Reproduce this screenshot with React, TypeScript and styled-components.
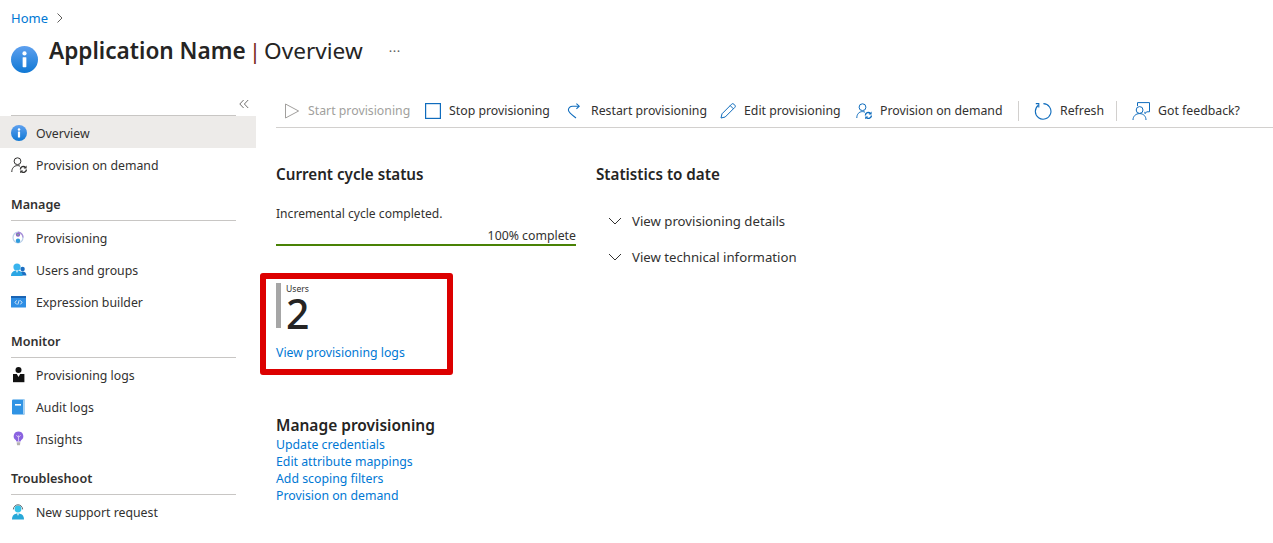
import { ReactNode } from 'react';
import styled, { createGlobalStyle } from 'styled-components';

const GlobalStyle = createGlobalStyle`
  html, body { margin: 0; padding: 0; background: #fff; }
  body { font-family: "Noto Sans", "Open Sans", "Liberation Sans", sans-serif; color: #323130; overflow: hidden; }
`;

const Svg = ({ size = 16, children }: { size?: number; children: ReactNode }) => (
  <svg width={size} height={size} viewBox="0 0 16 16" fill="none">{children}</svg>
);

const InfoIcon = ({ size = 16, id }: { size?: number; id: string }) => (
  <Svg size={size}>
    <defs>
      <linearGradient id={id} x1="0" y1="0" x2="0" y2="1">
        <stop offset="0" stopColor="#5ea0ef" />
        <stop offset="1" stopColor="#0f78d4" />
      </linearGradient>
    </defs>
    <circle cx="8" cy="8" r="8" fill={`url(#${id})`} />
    <rect x="6.9" y="6.6" width="2.2" height="6" rx="0.4" fill="#fff" />
    <circle cx="8" cy="4.4" r="1.25" fill="#fff" />
  </Svg>
);

const PersonSync = ({ color = '#323130', sync = '#323130' }: { color?: string; sync?: string }) => (
  <Svg>
    <circle cx="6.5" cy="4.2" r="3.4" stroke={color} strokeWidth="1" />
    <path d="M.8 15c0-3.8 2.2-6.4 5.7-6.4 1 0 1.8.2 2.5.6" stroke={color} strokeWidth="1" />
    <path d="M9.4 12.4a2.9 2.9 0 0 1 5-2M15.4 12.4a2.9 2.9 0 0 1-5 2" stroke={sync} strokeWidth="1.4" />
    <path d="M15.6 8.4v3h-3zM9.2 16.4v-3h3z" fill={sync} />
  </Svg>
);

const ProvisioningIcon = () => (
  <Svg>
    <ellipse cx="7" cy="7.6" rx="5" ry="5.4" stroke="#b9cfe8" strokeWidth="1.2" />
    <path d="M7 2.2a5 5.4 0 0 1 5 5.4" stroke="#a98bd8" strokeWidth="1.2" />
    <circle cx="7" cy="4.6" r="2.2" fill="#8a63c9" />
    <circle cx="7" cy="10.8" r="2.2" fill="#2f9bdc" />
    <circle cx="7" cy="4.6" r="0.8" fill="#7fd06a" />
  </Svg>
);

const UsersIcon = () => (
  <Svg>
    <circle cx="11.6" cy="7" r="2.2" fill="#1b6ec2" />
    <path d="M8 13.6c0-2.7 1.4-4.2 3.6-4.2s3.8 1.5 3.8 4.2z" fill="#1b6ec2" />
    <circle cx="6" cy="5" r="3.6" fill="#3ab4ee" />
    <path d="M0 14c0-3.8 2.4-5.6 6-5.6s5.6 1.8 5.6 5.6z" fill="#2ba6e4" />
    <path d="M5 8.4h2L6 11z" fill="#fff" />
  </Svg>
);

const ExpressionIcon = () => (
  <Svg>
    <rect x="0" y="2" width="15" height="11.4" rx="0.5" fill="#2f8ee4" />
    <rect x="0" y="2" width="15" height="2" fill="#1b64b4" />
    <path d="M5.6 6.4L4 8.4l1.6 2M9.4 6.4l1.6 2-1.6 2M8.2 6.2L6.8 10.6" stroke="#fff" strokeWidth="0.8" />
  </Svg>
);

const LogIcon = () => (
  <Svg>
    <circle cx="7.5" cy="3" r="3" fill="#111" />
    <path d="M2 7h11.4v8.2H2z" fill="#111" />
    <path d="M5.8 7h3.4L7.5 10z" fill="#fff" />
  </Svg>
);

const AuditIcon = () => (
  <Svg>
    <rect x="1" y="0.4" width="13" height="15" rx="1.2" fill="#2f93e4" />
    <rect x="12" y="0.4" width="2" height="15" rx="0.8" fill="#a9d2f2" />
    <rect x="4" y="5" width="6" height="1.6" fill="#fff" />
  </Svg>
);

const InsightsIcon = () => (
  <Svg>
    <path d="M7.5.4a4.8 4.8 0 0 0-2.8 8.7c.5.4.6.9.7 1.5h4.2c.1-.6.2-1.1.7-1.5A4.8 4.8 0 0 0 7.5.4z" fill="#8a63e0" />
    <path d="M7.5 4.4v5.8M5.4 4.2l2.1 2.4 2.1-2.4" stroke="#d8c6f2" strokeWidth="0.9" />
    <path d="M5.6 11.2h3.8l-.5 3H6.1z" fill="#b4b2b0" />
  </Svg>
);

const SupportIcon = () => (
  <Svg>
    <circle cx="7" cy="5" r="3.4" fill="#35c2e8" />
    <path d="M2.4 5.4a4.6 4.6 0 0 1 9.2 0" stroke="#5a6a72" strokeWidth="1" />
    <path d="M1 15.6c0-4 2.2-6 6-6s6 2 6 6z" fill="#28a8d8" />
    <path d="M6 9.6h2L7 12z" fill="#fff" />
  </Svg>
);

const PlayIcon = () => (
  <Svg>
    <path d="M1.5 1L14.6 8 1.5 15z" stroke="#a19f9d" strokeWidth="1" strokeLinejoin="round" />
  </Svg>
);

const StopIcon = () => (
  <Svg>
    <rect x="0.6" y="0.6" width="14.8" height="14.8" stroke="#0f6cbd" strokeWidth="1.2" />
  </Svg>
);

const RestartIcon = () => (
  <Svg>
    <path d="M12 3.2H5.6C3 3.2 1.4 5 1.4 7c0 1.6 3.6 5 7.6 8" stroke="#0f6cbd" strokeWidth="1.1" />
    <path d="M9.4.6L12.2 3.2 9.4 5.8" stroke="#0f6cbd" strokeWidth="1.1" />
  </Svg>
);

const PencilIcon = () => (
  <Svg>
    <path d="M1 15l1-4.2L11.6 1.2a1.6 1.6 0 0 1 2.3 0l.9.9a1.6 1.6 0 0 1 0 2.3L5.2 14z" stroke="#0f6cbd" strokeWidth="1" strokeLinejoin="round" />
    <path d="M10.2 2.6l3.2 3.2" stroke="#0f6cbd" strokeWidth="1" />
  </Svg>
);

const RefreshIcon = () => (
  <svg width="18" height="18" viewBox="0 0 18 18" fill="none">
    <path d="M4.4 3.2a7.8 7.8 0 1 0 5-1.6" stroke="#0f6cbd" strokeWidth="1.1" />
    <path d="M1.8 1.6h3v4" stroke="#0f6cbd" strokeWidth="1.1" />
  </svg>
);

const FeedbackIcon = () => (
  <svg width="18" height="18" viewBox="0 0 18 18" fill="none">
    <path d="M5.5 4V.6h12v9.2h-2.6l-2 1.8V9.8" stroke="#0f6cbd" strokeWidth="1" />
    <circle cx="7.6" cy="8" r="3.4" stroke="#0f6cbd" strokeWidth="1" />
    <path d="M1 18c0-3.6 2.6-6.4 6.6-6.4s6.4 2.8 6.4 6.4" stroke="#0f6cbd" strokeWidth="1" />
  </svg>
);

const ChevronRight = () => (
  <svg width="8" height="12" viewBox="0 0 8 12" fill="none">
    <path d="M1.5 1.5L6 6l-4.5 4.5" stroke="#605e5c" strokeWidth="1" />
  </svg>
);

const ChevronDown = () => (
  <svg width="14" height="8" viewBox="0 0 14 8" fill="none">
    <path d="M1 1l6 6 6-6" stroke="#323130" strokeWidth="1" />
  </svg>
);

const CollapseIcon = () => (
  <svg width="10" height="10" viewBox="0 0 10 10" fill="none">
    <path d="M4.6 1L.8 5l3.8 4M9.2 1L5.4 5l3.8 4" stroke="#605e5c" strokeWidth="0.9" />
  </svg>
);

const Page = styled.div`
  width: 1273px;
  height: 543px;
  display: flex;
  flex-direction: column;
  overflow: hidden;
`;

const Header = styled.header`
  height: 94px;
  padding-left: 11px;
  box-sizing: border-box;
`;

const Crumbs = styled.div`
  display: flex;
  align-items: center;
  gap: 8px;
  height: 36px;
  font-size: 13px;
  color: #0078d4;
`;

const TitleRow = styled.div`
  display: flex;
  align-items: flex-start;
`;

const TitleIcon = styled.span`
  display: block;
  margin-top: 10px;
  width: 38px;
  height: 27px;
`;

const Title = styled.h1`
  margin: 0;
  font-size: 22.6px;
  line-height: 30px;
  font-weight: 600;
  color: #252423;
  span { font-weight: 400; }
  i { font-style: normal; font-weight: 400; color: #7a2a20; padding: 0 3px; }
`;

const More = styled.span`
  margin-left: 26px;
  font-size: 13px;
  line-height: 30px;
  color: #605e5c;
  letter-spacing: 0.5px;
`;

const Body = styled.div`
  display: flex;
  flex: 1;
`;

const Sidebar = styled.nav`
  width: 256px;
  flex: none;
`;

const CollapseRow = styled.div`
  height: 21px;
  margin: 0 20px 0 11px;
  border-bottom: 1px solid #c8c6c4;
  position: relative;
  svg { position: absolute; right: -13px; top: 5px; }
`;

const NavItem = styled.div<{ $active?: boolean }>`
  display: flex;
  align-items: center;
  height: 32px;
  box-sizing: border-box;
  padding: 2px 0 0 11px;
  gap: 9px;
  font-size: 12.3px;
  color: #323130;
  background: ${p => (p.$active ? '#edebe9' : 'transparent')};
`;

const NavHeading = styled.div`
  height: 41px;
  margin: 0 20px 0 11px;
  box-sizing: border-box;
  padding-top: 16px;
  border-bottom: 1px solid #c8c6c4;
  font-size: 12.6px;
  line-height: 18px;
  font-weight: 600;
  color: #323130;
`;

const Main = styled.main`
  flex: 1;
  padding-left: 20px;
  min-width: 0;
`;

const Toolbar = styled.div`
  height: 33px;
  display: flex;
  align-items: center;
  border-bottom: 1px solid #d2d0ce;
  padding-left: 8px;
`;

const ToolButton = styled.div<{ $disabled?: boolean; $w: number }>`
  display: flex;
  align-items: center;
  gap: 8px;
  width: ${p => p.$w}px;
  flex: none;
  font-size: 12.3px;
  white-space: nowrap;
  color: ${p => (p.$disabled ? '#a19f9d' : '#323130')};
`;

const ToolDivider = styled.span`
  width: 1px;
  height: 20px;
  background: #d2d0ce;
  margin-right: 15px;
  flex: none;
`;

const Columns = styled.div`
  display: flex;
  gap: 20px;
  padding-top: 35px;
`;

const LeftColumn = styled.section`
  width: 300px;
`;

const SectionTitle = styled.h2`
  margin: 0;
  font-size: 15.2px;
  line-height: 22px;
  font-weight: 600;
  color: #252423;
`;

const StatusText = styled.div`
  margin-top: 20px;
  font-size: 12.1px;
  line-height: 18px;
`;

const ProgressLabel = styled.div`
  margin-top: 4px;
  text-align: right;
  font-size: 12.3px;
  line-height: 17px;
`;

const ProgressBar = styled.div`
  height: 2px;
  background: #498205;
`;

const Tile = styled.div`
  width: 193px;
  height: 102px;
  box-sizing: border-box;
  margin: 27px 0 0 -16px;
  border: 6px solid #dc0000;
  border-radius: 3px;
  padding: 4px 0 0 10px;
`;

const Metric = styled.div`
  height: 45px;
  border-left: 5px solid #a6a6a6;
  padding-left: 5px;
`;

const MetricLabel = styled.div`
  font-size: 8.6px;
  line-height: 12px;
`;

const MetricValue = styled.div`
  font-size: 41px;
  line-height: 36px;
  font-weight: 500;
  color: #252423;
`;

const LinkText = styled.a`
  display: block;
  font-size: 12.3px;
  line-height: 17px;
  color: #0078d4;
  white-space: nowrap;
`;

const TileLink = styled(LinkText)`
  margin-top: 16px;
`;

const ManageBlock = styled.div`
  margin-top: 40px;
`;

const ManageTitle = styled(SectionTitle)`
  font-size: 15.5px;
  line-height: 21px;
`;

const Expander = styled.div`
  display: flex;
  align-items: center;
  gap: 10px;
  height: 36px;
  padding-left: 12px;
  font-size: 13.2px;
  &:first-of-type { margin-top: 18px; }
`;

const App = () => (
  <Page>
    <GlobalStyle />
    <Header>
      <Crumbs>Home <ChevronRight /></Crumbs>
      <TitleRow>
        <TitleIcon><InfoIcon size={27} id="info-title" /></TitleIcon>
        <Title>Application Name<i>|</i><span>Overview</span></Title>
        <More>···</More>
      </TitleRow>
    </Header>
    <Body>
      <Sidebar>
        <CollapseRow><CollapseIcon /></CollapseRow>
        <NavItem $active><InfoIcon id="info-nav" /> Overview</NavItem>
        <NavItem><PersonSync /> Provision on demand</NavItem>
        <NavHeading>Manage</NavHeading>
        <NavItem><ProvisioningIcon /> Provisioning</NavItem>
        <NavItem><UsersIcon /> Users and groups</NavItem>
        <NavItem><ExpressionIcon /> Expression builder</NavItem>
        <NavHeading>Monitor</NavHeading>
        <NavItem><LogIcon /> Provisioning logs</NavItem>
        <NavItem><AuditIcon /> Audit logs</NavItem>
        <NavItem><InsightsIcon /> Insights</NavItem>
        <NavHeading>Troubleshoot</NavHeading>
        <NavItem><SupportIcon /> New support request</NavItem>
      </Sidebar>
      <Main>
        <Toolbar>
          <ToolButton $disabled $w={141}><PlayIcon /> Start provisioning</ToolButton>
          <ToolButton $w={142}><StopIcon /> Stop provisioning</ToolButton>
          <ToolButton $w={153}><RestartIcon /> Restart provisioning</ToolButton>
          <ToolButton $w={136}><PencilIcon /> Edit provisioning</ToolButton>
          <ToolButton $w={162}><PersonSync color="#0f6cbd" sync="#0f6cbd" /> Provision on demand</ToolButton>
          <ToolDivider />
          <ToolButton $w={82}><RefreshIcon /> Refresh</ToolButton>
          <ToolDivider />
          <ToolButton $w={130}><FeedbackIcon /> Got feedback?</ToolButton>
        </Toolbar>
        <Columns>
          <LeftColumn>
            <SectionTitle>Current cycle status</SectionTitle>
            <StatusText>Incremental cycle completed.</StatusText>
            <ProgressLabel>100% complete</ProgressLabel>
            <ProgressBar />
            <Tile>
              <Metric>
                <MetricLabel>Users</MetricLabel>
                <MetricValue>2</MetricValue>
              </Metric>
              <TileLink>View provisioning logs</TileLink>
            </Tile>
            <ManageBlock>
              <ManageTitle>Manage provisioning</ManageTitle>
              <LinkText>Update credentials</LinkText>
              <LinkText>Edit attribute mappings</LinkText>
              <LinkText>Add scoping filters</LinkText>
              <LinkText>Provision on demand</LinkText>
            </ManageBlock>
          </LeftColumn>
          <section>
            <SectionTitle>Statistics to date</SectionTitle>
            <Expander><ChevronDown /> View provisioning details</Expander>
            <Expander><ChevronDown /> View technical information</Expander>
          </section>
        </Columns>
      </Main>
    </Body>
  </Page>
);

export default App;
